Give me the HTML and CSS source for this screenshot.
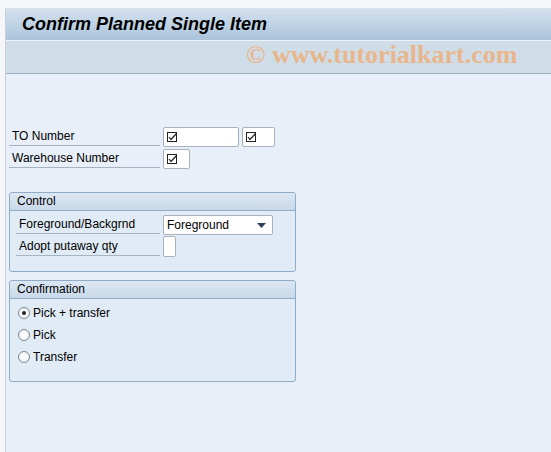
FILE: index.html
```html
<!DOCTYPE html>
<html lang="en">
<head>
  <meta charset="UTF-8" />
  <title>Confirm Planned Single Item</title>
  <link rel="stylesheet" href="styles.css">
</head>
<body>
  <div class="screen">
    <div class="titlebar">
      <h1>Confirm Planned Single Item</h1>
    </div>
    <div class="toolbar">
      <span class="watermark">© www.tutorialkart.com</span>
    </div>

    <div class="content">
      <div class="fields">
        <div class="row">
          <label class="lbl">TO Number</label>
          <span class="field w75"><svg class="req" viewBox="0 0 10 10"><rect x="0.5" y="0.5" width="9" height="9" fill="none" stroke="#222"/><path d="M2 5 L4 7.5 L9.5 1.5" fill="none" stroke="#222" stroke-width="1.2"/></svg></span>
          <span class="field w33"><svg class="req" viewBox="0 0 10 10"><rect x="0.5" y="0.5" width="9" height="9" fill="none" stroke="#222"/><path d="M2 5 L4 7.5 L9.5 1.5" fill="none" stroke="#222" stroke-width="1.2"/></svg></span>
        </div>
        <div class="row">
          <label class="lbl">Warehouse Number</label>
          <span class="field w27"><svg class="req" viewBox="0 0 10 10"><rect x="0.5" y="0.5" width="9" height="9" fill="none" stroke="#222"/><path d="M2 5 L4 7.5 L9.5 1.5" fill="none" stroke="#222" stroke-width="1.2"/></svg></span>
        </div>
      </div>

      <div class="group group-control">
        <div class="group-head">Control</div>
        <div class="group-body">
          <div class="row">
            <label class="lbl">Foreground/Backgrnd</label>
            <span class="field select">Foreground<svg class="arrow" viewBox="0 0 9 5"><path d="M0 0 H9 L4.5 5 Z" fill="#2b3f5c"/></svg></span>
          </div>
          <div class="row">
            <label class="lbl">Adopt putaway qty</label>
            <span class="field check"></span>
          </div>
        </div>
      </div>

      <div class="group group-confirm">
        <div class="group-head">Confirmation</div>
        <div class="group-body radios">
          <div class="radio-row"><span class="radio on"></span>Pick + transfer</div>
          <div class="radio-row"><span class="radio"></span>Pick</div>
          <div class="radio-row"><span class="radio"></span>Transfer</div>
        </div>
      </div>
    </div>
  </div>
</body>
</html>
```

FILE: styles.css
```css
html, body {
  margin: 0;
  height: 100%;
}
body {
  font-family: "Liberation Sans", Arial, sans-serif;
  font-size: 12px;
  color: #000;
  background: #f4f6f9;
  padding: 8px 0 0 5px;
  box-sizing: border-box;
  overflow: hidden;
}
.screen {
  height: 100%;
  background: #e8eff8;
  border-left: 1px solid #c9d2dc;
  border-top: 1px solid #dde4ec;
}
.titlebar {
  height: 31px;
  background: linear-gradient(#d3e1ee, #abc4dc);
  border-bottom: 1px solid #eef3f8;
  display: flex;
  align-items: center;
}
h1 {
  margin: 0 0 1px 16px;
  font-size: 18px;
  font-style: italic;
  font-weight: bold;
  color: #000;
}
.toolbar {
  height: 32px;
  background: #cfdde9;
  border-bottom: 1px solid #9eafc0;
  display: flex;
  align-items: center;
}
.watermark {
  margin: -5px 0 0 240px;
  font-family: "Liberation Serif", "Times New Roman", serif;
  font-weight: bold;
  font-size: 26px;
  color: #e9b68b;
}
.content {
  padding: 51px 0 0 3px;
}
.row {
  display: flex;
  align-items: flex-end;
  height: 22px;
}
.lbl {
  width: 151px;
  padding-left: 3px;
  line-height: 18px;
  border-bottom: 1px solid #a6b4c2;
  box-sizing: border-box;
  margin-bottom: 1px;
}
.field {
  height: 20px;
  margin-left: 3px;
  background: #fff;
  border: 1px solid #a7b2bd;
  border-radius: 2px;
  box-sizing: border-box;
  display: flex;
  align-items: center;
  padding-left: 3px;
}
.req {
  width: 10px;
  height: 10px;
}
.w75 { width: 76px; }
.w33 { width: 33px; }
.w27 { width: 27px; }
.group {
  width: 287px;
  border: 1px solid #8eacc8;
  border-radius: 3px;
  box-sizing: border-box;
  background: #e1ebf5;
}
.group-control {
  margin-top: 23px;
  height: 80px;
}
.group-confirm {
  margin-top: 8px;
  height: 102px;
}
.group-head {
  height: 17px;
  line-height: 16px;
  padding-left: 7px;
  background: linear-gradient(#dce7f2, #c9d9ea);
  border-bottom: 1px solid #8eacc8;
  border-radius: 3px 3px 0 0;
}
.group-body {
  padding: 2px 0 0 6px;
}
.group-body .lbl {
  width: 144px;
}
.select {
  width: 110px;
  justify-content: space-between;
  padding-right: 6px;
}
.arrow {
  width: 9px;
  height: 5px;
}
.check {
  width: 13px;
  height: 21px;
  padding: 0;
}
.radios {
  padding: 3px 0 0 8px;
}
.radio-row {
  display: flex;
  align-items: center;
  height: 22px;
}
.radio {
  width: 12px;
  height: 12px;
  border: 1px solid #7d8790;
  border-radius: 50%;
  box-sizing: border-box;
  background: radial-gradient(#fff, #e9edf1);
  margin-right: 3px;
  display: flex;
  align-items: center;
  justify-content: center;
}
.radio.on::after {
  content: "";
  width: 4px;
  height: 4px;
  border-radius: 50%;
  background: #222;
}
```
